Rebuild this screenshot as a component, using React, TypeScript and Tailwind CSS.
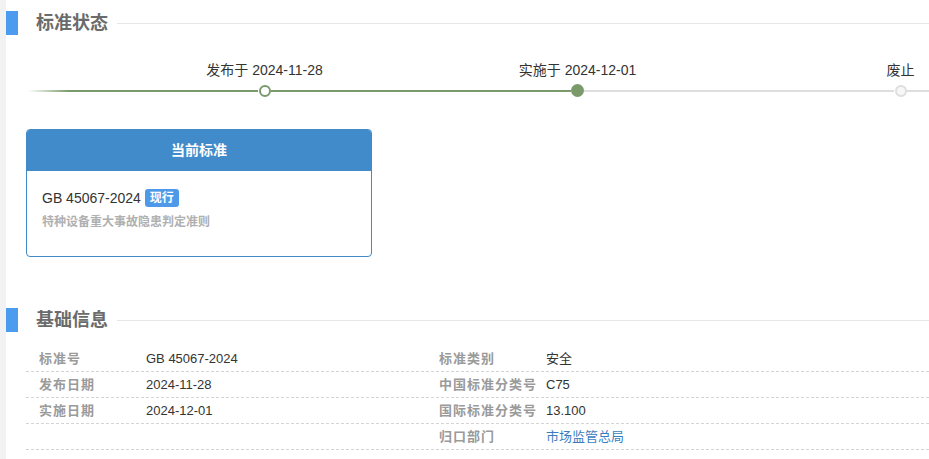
import React from "react";

const FONT = { fontFamily: '"Liberation Sans", Arial, "Noto Sans CJK SC", sans-serif' };

function SectionTitle({ title }: { title: string }) {
  return (
    <div className="flex h-[24px] items-center">
      <div className="h-[24px] w-[12px] bg-[#4b9bef]" />
      <div className="ml-[18px] text-[18px] font-bold leading-[24px] text-[#6b6b6b]">{title}</div>
      <div className="ml-[9px] h-px flex-1 bg-[#e6e6e6]" />
    </div>
  );
}

function Node({ label, kind }: { label: string; kind: "hollow" | "filled" | "gray" }) {
  const cls =
    kind === "hollow"
      ? "h-[12px] w-[12px] rounded-full border-2 border-[#7a9a6b] bg-white"
      : kind === "filled"
      ? "h-[13px] w-[13px] rounded-full bg-[#7a9a6b]"
      : "h-[12px] w-[12px] rounded-full border-2 border-[#dedede] bg-[#f7f7f7]";
  return (
    <div className="relative flex h-[13px] w-[13px] shrink-0 items-center justify-center">
      <div className={cls} />
      <div className="absolute left-1/2 top-[-24px] flex h-[20px] -translate-x-1/2 items-center whitespace-nowrap text-[14px] leading-[20px] text-[#333]">
        {label}
      </div>
    </div>
  );
}

const rows: [string, React.ReactNode, string, React.ReactNode][] = [
  ["标准号", "GB 45067-2024", "标准类别", "安全"],
  ["发布日期", "2024-11-28", "中国标准分类号", "C75"],
  ["实施日期", "2024-12-01", "国际标准分类号", "13.100"],
  ["", "", "归口部门", <span className="text-[#3a7dbf]">市场监管总局</span>],
];

export default function App() {
  return (
    <div className="flex h-[459px] w-[929px] overflow-hidden bg-white" style={FONT}>
      <div className="w-[6px] shrink-0 bg-[#f2f2f2]" />
      <div className="flex min-w-0 flex-1 flex-col pt-[11px]">
        <SectionTitle title="标准状态" />

        <div className="ml-[22px] mt-[49px] flex h-[13px] items-center">
          <div className="h-[2px] w-[230px] bg-linear-to-r from-white to-[#7a9a6b] to-[18%]" />
          <Node label="发布于 2024-11-28" kind="hollow" />
          <div className="h-[2px] w-[300px] bg-[#7a9a6b]" />
          <Node label="实施于 2024-12-01" kind="filled" />
          <div className="h-[2px] w-[310px] bg-[#dedede]" />
          <Node label="废止" kind="gray" />
          <div className="h-[2px] flex-1 bg-[#dedede]" />
        </div>

        <div className="ml-[20px] mt-[32px] w-[346px] overflow-hidden rounded-[4px] border border-[#428bca]">
          <div className="flex h-[41px] items-center justify-center bg-[#428bca] text-[14px] font-bold text-white">
            当前标准
          </div>
          <div className="px-[15px] pb-[24px] pt-[17px]">
            <div className="flex items-center text-[14px] leading-[20px] text-[#333]">
              <span>GB 45067-2024</span>
              <span className="ml-[4px] rounded-[3px] bg-[#4e9ae8] px-[5px] text-[12px] font-bold leading-[18px] text-white">
                现行
              </span>
            </div>
            <div className="mt-[4px] text-[12px] font-bold leading-[20px] text-[#b0b0b0]">特种设备重大事故隐患判定准则</div>
          </div>
        </div>

        <div className="mt-[51px]">
          <SectionTitle title="基础信息" />
        </div>

        <div className="ml-[20px] mt-[14px] flex flex-col">
          {rows.map((r, i) => (
            <div
              key={i}
              className="grid h-[26px] grid-cols-[120px_280px_120px_1fr] items-center border-b border-dashed border-[#d4d4d4] text-[13px]"
            >
              <div className="pl-[13px] font-bold tracking-[1px] text-[#9a9a9a]">{r[0]}</div>
              <div className="text-[#333]">{r[1]}</div>
              <div className="pl-[13px] font-bold tracking-[1px] text-[#9a9a9a]">{r[2]}</div>
              <div className="text-[#333]">{r[3]}</div>
            </div>
          ))}
        </div>
      </div>
    </div>
  );
}
